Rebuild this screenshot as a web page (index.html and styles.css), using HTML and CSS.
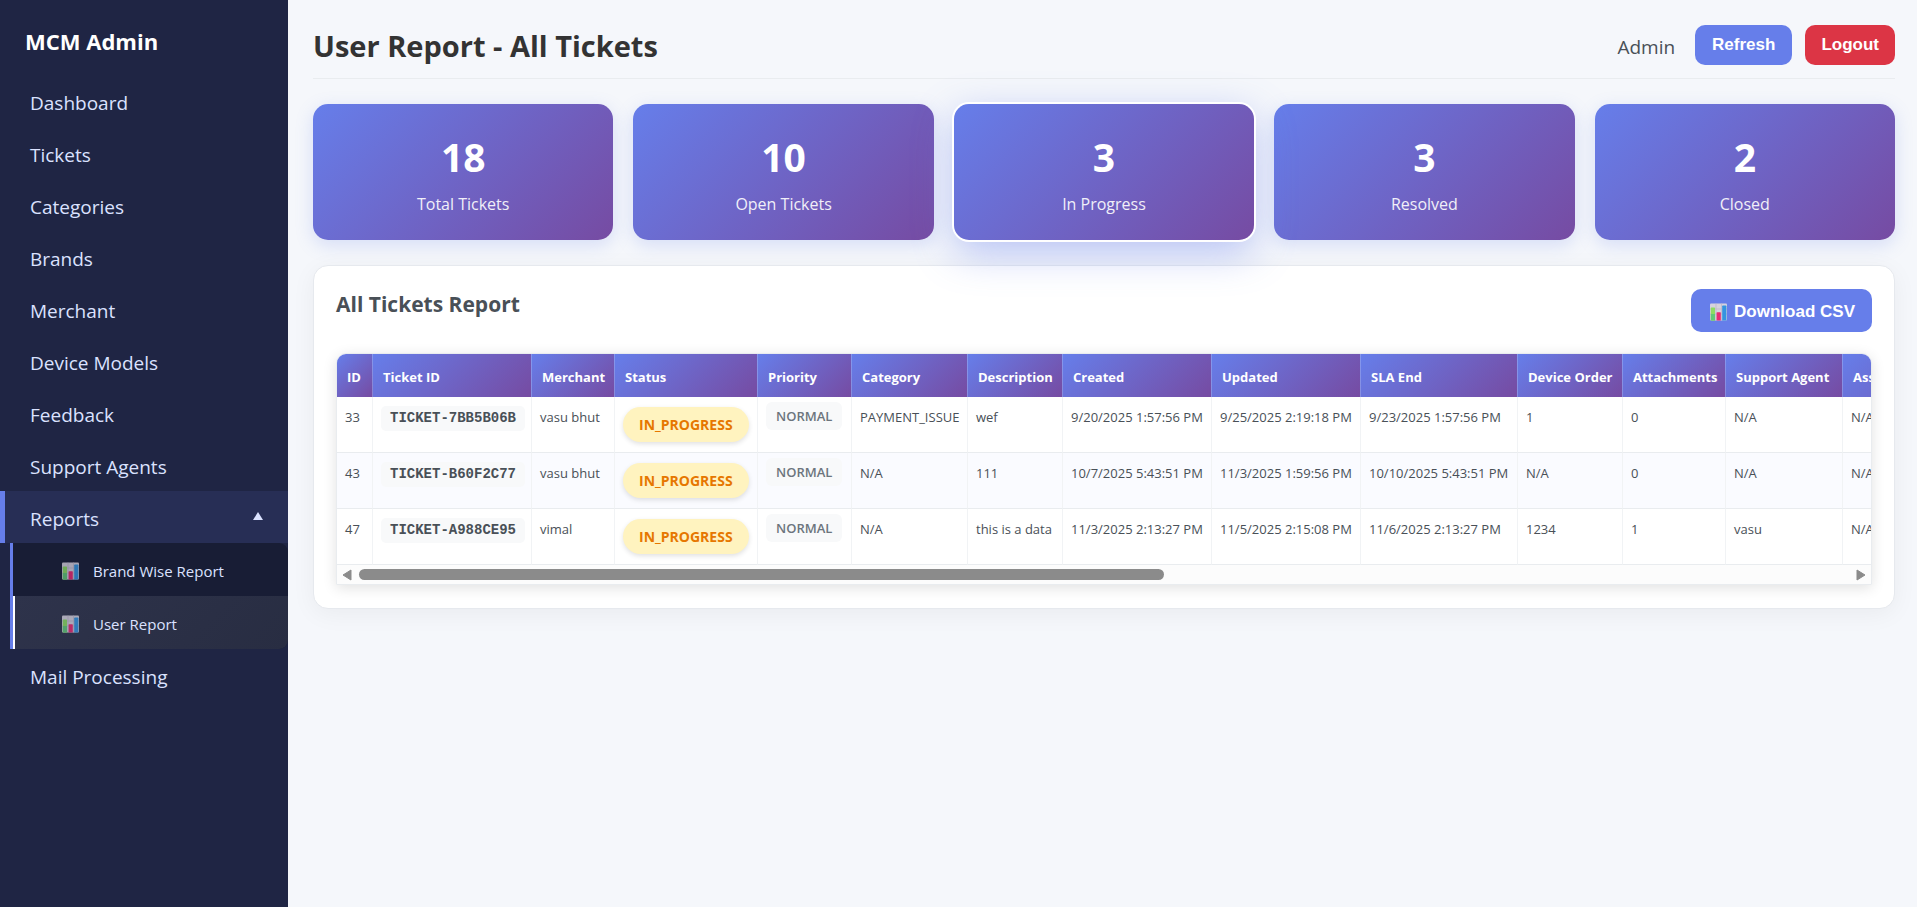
FILE: index.html
```html
<!DOCTYPE html>
<html lang="en">
<head>
<meta charset="utf-8">
<title>MCM Admin - User Report</title>
<link rel="stylesheet" href="styles.css">
</head>
<body>
<svg class="sprite" aria-hidden="true">
  <symbol id="chart" viewBox="0 0 18 18">
    <rect y=".5" width="17" height="17" rx="1" fill="#d6d2de"/>
    <path d="M0 6h17M0 11h17M6 .5v17M11.5 .5v17" stroke="#bcb6c8" stroke-width=".7"/>
    <rect x=".8" y="4.5" width="4.2" height="13" rx=".6" fill="#8ddc62"/>
    <rect x=".8" y="11" width="4.2" height="6.5" fill="#62c878"/>
    <rect x="6.6" y="9.2" width="4.2" height="8.3" rx=".6" fill="#ea2a72"/>
    <rect x="12.2" y="2.6" width="4.2" height="14.9" rx=".6" fill="#3494e0"/>
  </symbol>
</svg>
<div class="app">
  <aside class="sidebar">
    <h2 class="brand">MCM Admin</h2>
    <nav class="nav">
      <a class="nav-item" href="#">Dashboard</a>
      <a class="nav-item" href="#">Tickets</a>
      <a class="nav-item" href="#">Categories</a>
      <a class="nav-item" href="#">Brands</a>
      <a class="nav-item" href="#">Merchant</a>
      <a class="nav-item" href="#">Device Models</a>
      <a class="nav-item" href="#">Feedback</a>
      <a class="nav-item" href="#">Support Agents</a>
      <a class="nav-item open" href="#">Reports
        <svg class="caret" viewBox="0 0 10 8" aria-hidden="true"><path d="M5 0l5 8H0z" fill="currentColor"/></svg>
      </a>
      <div class="subnav">
        <a class="sub-item" href="#"><svg class="chart"><use href="#chart"/></svg>Brand Wise Report</a>
        <a class="sub-item current" href="#"><svg class="chart"><use href="#chart"/></svg>User Report</a>
      </div>
      <a class="nav-item" href="#">Mail Processing</a>
    </nav>
  </aside>
  <main class="main">
    <header class="topbar">
      <h1 class="title">User Report - All Tickets</h1>
      <div class="actions">
        <span class="user">Admin</span>
        <button class="btn" type="button">Refresh</button>
        <button class="btn danger" type="button">Logout</button>
      </div>
    </header>
    <section class="stats">
      <div class="stat"><div class="num">18</div><div class="label">Total Tickets</div></div>
      <div class="stat"><div class="num">10</div><div class="label">Open Tickets</div></div>
      <div class="stat active"><div class="num">3</div><div class="label">In Progress</div></div>
      <div class="stat"><div class="num">3</div><div class="label">Resolved</div></div>
      <div class="stat"><div class="num">2</div><div class="label">Closed</div></div>
    </section>
    <section class="card">
      <div class="card-head">
        <h3 class="card-title">All Tickets Report</h3>
        <button class="btn download" type="button"><svg class="chart"><use href="#chart"/></svg>Download CSV</button>
      </div>
      <div class="table-box">
        <div class="viewport">
          <table class="tickets">
            <colgroup>
              <col class="c-id"><col class="c-ticket"><col class="c-merchant"><col class="c-status"><col class="c-priority"><col class="c-category"><col class="c-desc"><col class="c-date"><col class="c-date"><col class="c-sla"><col class="c-device"><col class="c-attach"><col class="c-agent"><col class="c-assigned">
            </colgroup>
            <thead>
              <tr><th>ID</th><th>Ticket ID</th><th>Merchant</th><th>Status</th><th>Priority</th><th>Category</th><th>Description</th><th>Created</th><th>Updated</th><th>SLA End</th><th>Device Order</th><th>Attachments</th><th>Support Agent</th><th>Assigned</th></tr>
            </thead>
            <tbody>
              <tr><td>33</td><td><span class="code">TICKET-7BB5B06B</span></td><td>vasu bhut</td><td><span class="status">IN_PROGRESS</span></td><td><span class="priority">NORMAL</span></td><td>PAYMENT_ISSUE</td><td>wef</td><td>9/20/2025 1:57:56 PM</td><td>9/25/2025 2:19:18 PM</td><td>9/23/2025 1:57:56 PM</td><td>1</td><td>0</td><td>N/A</td><td>N/A</td></tr>
              <tr><td>43</td><td><span class="code">TICKET-B60F2C77</span></td><td>vasu bhut</td><td><span class="status">IN_PROGRESS</span></td><td><span class="priority">NORMAL</span></td><td>N/A</td><td>111</td><td>10/7/2025 5:43:51 PM</td><td>11/3/2025 1:59:56 PM</td><td>10/10/2025 5:43:51 PM</td><td>N/A</td><td>0</td><td>N/A</td><td>N/A</td></tr>
              <tr><td>47</td><td><span class="code">TICKET-A988CE95</span></td><td>vimal</td><td><span class="status">IN_PROGRESS</span></td><td><span class="priority">NORMAL</span></td><td>N/A</td><td>this is a data</td><td>11/3/2025 2:13:27 PM</td><td>11/5/2025 2:15:08 PM</td><td>11/6/2025 2:13:27 PM</td><td>1234</td><td>1</td><td>vasu</td><td>N/A</td></tr>
            </tbody>
          </table>
        </div>
        <div class="scrollbar" aria-hidden="true">
          <svg class="arrow" viewBox="0 0 10 12"><path d="M9 1v10L1 6z"/></svg>
          <div class="track"><div class="thumb"></div></div>
          <svg class="arrow" viewBox="0 0 10 12"><path d="M1 1v10l8-5z"/></svg>
        </div>
      </div>
    </section>
  </main>
</div>
</body>
</html>
```

FILE: styles.css
```css
* {
  box-sizing: border-box;
}

body {
  margin: 0;
  font-family: "Segoe UI", "Open Sans", "Noto Sans", sans-serif;
  background: #f5f7fb;
  color: #333;
}

h1, h2, h3 {
  margin: 0;
}

a {
  color: inherit;
  text-decoration: none;
}

.sprite {
  display: none;
}

.chart {
  width: 18px;
  height: 18px;
  flex: none;
}

.app {
  display: flex;
  min-height: 100vh;
}

/* Sidebar */
.sidebar {
  flex: 0 0 288px;
  background: #1f2544;
  color: #dbe2ff;
  padding-top: 24px;
}

.brand {
  padding: 0 25px;
  margin-bottom: 17px;
  font-size: 22px;
  line-height: 34px;
  color: #fff;
}

.nav-item {
  display: flex;
  align-items: center;
  justify-content: space-between;
  height: 52px;
  padding: 6px 25px 3px 25px;
  border-left: 5px solid transparent;
  font-size: 19px;
  line-height: 26px;
}

.nav-item.open {
  background: #272e55;
  border-left-color: #667eea;
}

.caret {
  width: 10px;
  height: 8px;
  margin-bottom: 5px;
}

.subnav {
  margin-left: 10px;
  border-left: 3px solid #667eea;
  border-radius: 0 9px 9px 0;
  overflow: hidden;
  background: #181d35;
}

.sub-item {
  display: flex;
  align-items: center;
  gap: 13px;
  height: 53px;
  padding: 2px 16px 0 49px;
  font-size: 15px;
}

.sub-item .chart {
  opacity: .75;
}

.sub-item.current {
  padding-left: 47px;
  border-left: 2px solid #fff;
  background: linear-gradient(135deg, #2e334b, #282d42);
}

/* Main area */
.main {
  flex: 1;
  min-width: 0;
  padding: 25px 22px 25px 25px;
}

.topbar {
  display: flex;
  justify-content: space-between;
  height: 54px;
  border-bottom: 1px solid #e9ecef;
  margin-bottom: 25px;
}

.title {
  font-size: 29px;
  line-height: 42px;
}

.actions {
  display: flex;
  align-items: flex-start;
}

.user {
  margin-right: 20px;
  font-size: 19px;
  line-height: 44px;
  color: #495057;
}

.btn {
  height: 40px;
  padding: 0 17px 1px;
  border: 0;
  border-radius: 10px;
  background: #667eea;
  color: #fff;
  font: bold 17px/20px "Liberation Sans", Arial, sans-serif;
}

.btn.danger {
  margin-left: 13px;
  padding: 0 16px 1px;
  background: #dc3545;
}

.stats {
  display: grid;
  grid-template-columns: repeat(5, 1fr);
  gap: 20px;
  margin-bottom: 25px;
}

.stat {
  height: 136px;
  padding: 25px 20px 20px;
  border-radius: 15px;
  background: linear-gradient(135deg, #667eea, #764ba2);
  box-shadow: 0 5px 18px rgba(102, 126, 234, .22);
  color: #fff;
  text-align: center;
}

.stat.active {
  position: relative;
  box-shadow: 0 0 0 2px #fff, 0 12px 40px rgba(102, 126, 234, .45);
}

.num {
  font-size: 39px;
  font-weight: 700;
  line-height: 56px;
}

.label {
  margin-top: 6px;
  font-size: 16px;
  line-height: 26px;
  opacity: .9;
}

/* Report card */
.card {
  padding: 23px 22px;
  border: 1px solid #e6e9ee;
  border-radius: 15px;
  background: #fff;
  box-shadow: 0 5px 25px rgba(0, 0, 0, .05);
}

.card-head {
  display: flex;
  justify-content: space-between;
  align-items: flex-start;
  margin-bottom: 21px;
}

.card-title {
  font-size: 21px;
  line-height: 30px;
  color: #495057;
}

.download {
  display: flex;
  align-items: center;
  gap: 6px;
  height: 43px;
  padding: 2px 17px 0 19px;
}

.table-box {
  border: 1px solid #e9ecef;
  border-radius: 10px 10px 0 0;
  overflow: hidden;
  box-shadow: 0 3px 14px rgba(0, 0, 0, .12);
}

.viewport {
  overflow: hidden;
}

.tickets {
  table-layout: fixed;
  width: 1666px;
  border-spacing: 0;
  font-size: 13px;
}

.c-id { width: 36px; }
.c-ticket { width: 159px; }
.c-merchant { width: 83px; }
.c-status { width: 143px; }
.c-priority { width: 94px; }
.c-category { width: 116px; }
.c-desc { width: 95px; }
.c-date { width: 149px; }
.c-sla { width: 157px; }
.c-device { width: 105px; }
.c-attach { width: 103px; }
.c-agent { width: 117px; }
.c-assigned { width: 160px; }

.tickets th {
  height: 43px;
  padding: 2px 0 0 10px;
  border-right: 1px solid rgba(255, 255, 255, .2);
  background: linear-gradient(135deg, #667eea, #764ba2);
  color: #fff;
  text-align: left;
  white-space: nowrap;
}

.tickets td {
  height: 56px;
  padding: 5px 0 0 8px;
  border-right: 1px solid #f1f3f5;
  border-bottom: 1px solid #e9ecef;
  color: #495057;
  line-height: 30px;
  vertical-align: top;
  white-space: nowrap;
}

.tickets tbody tr:nth-child(even) td {
  background: #fafbff;
}

.code, .status, .priority {
  display: block;
  width: max-content;
}

.code {
  margin-top: 4px;
  padding: 0 9px;
  border-radius: 5px;
  background: #f8f9fa;
  font: bold 14px/25px "Courier New", "Liberation Mono", monospace;
}

.status {
  margin-top: 5px;
  padding: 2px 16px 1px;
  border-radius: 20px;
  background: #fff3bf;
  color: #e67700;
  font-size: 14px;
  font-weight: 700;
  line-height: 32px;
  box-shadow: 0 2px 5px rgba(0, 0, 0, .12);
}

.priority {
  padding: 1px 10px;
  border-radius: 6px;
  background: #f8f9fa;
  color: #6c757d;
  font-weight: 600;
  line-height: 26px;
}

.scrollbar {
  display: flex;
  align-items: center;
  gap: 7px;
  height: 19px;
  padding: 0 5px;
  background: #fcfcfc;
}

.arrow {
  width: 10px;
  height: 12px;
  fill: #8b8b8b;
  stroke: #8b8b8b;
  stroke-linejoin: round;
}

.track {
  flex: 1;
}

.thumb {
  width: 54%;
  height: 11px;
  border-radius: 6px;
  background: #8b8b8b;
}
```
